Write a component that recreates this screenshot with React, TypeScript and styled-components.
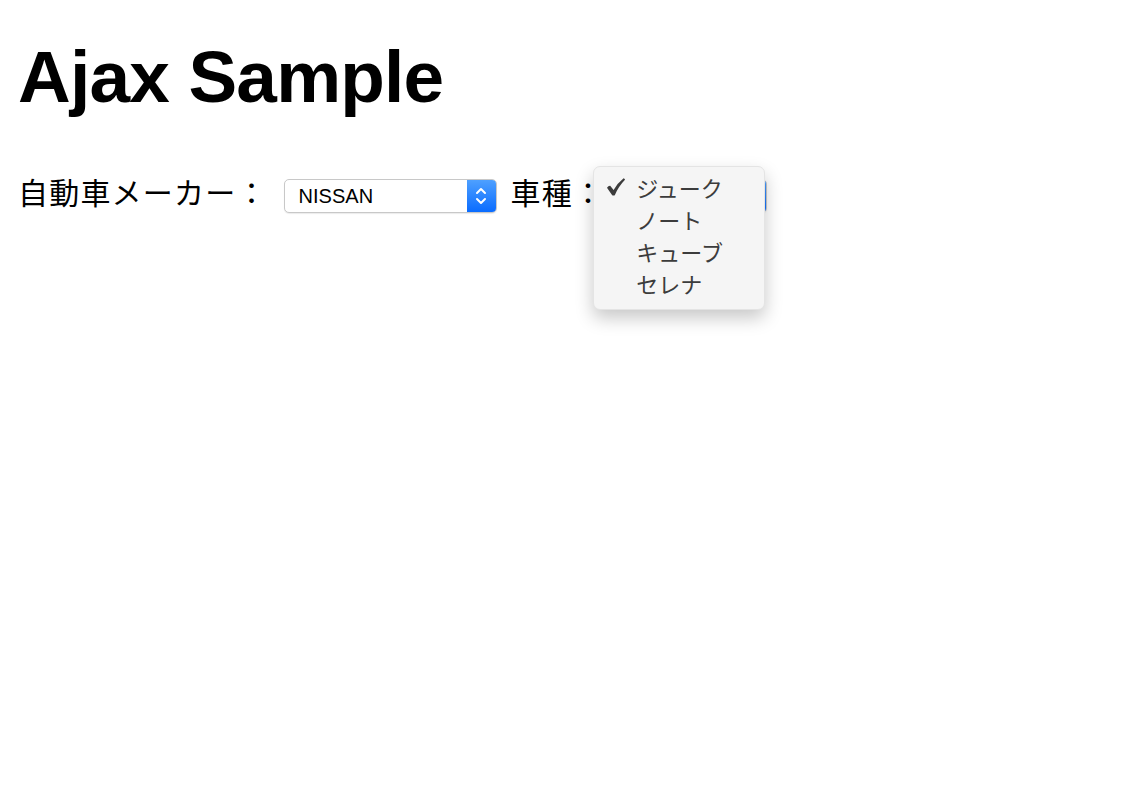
import React from "react";
import styled, { createGlobalStyle } from "styled-components";

const GlobalStyle = createGlobalStyle`
  html, body {
    margin: 0;
    padding: 0;
    background: #ffffff;
  }
  body {
    font-family: "Liberation Sans", "Noto Sans CJK JP", sans-serif;
    color: #000;
  }
`;

const Page = styled.div`
  min-height: 812px;
  box-sizing: border-box;
  padding: 36px 18px 0;
`;

const Title = styled.h1`
  margin: 0;
  font-family: "Liberation Sans", Arial, sans-serif;
  font-size: 73px;
  font-weight: 700;
  line-height: 82px;
  letter-spacing: -0.8px;
`;

const Form = styled.div`
  margin-top: 57px;
  display: flex;
  align-items: flex-start;
  height: 40px;
`;

const Label = styled.span<{ $gap: number }>`
  font-family: "Noto Sans CJK JP", sans-serif;
  font-size: 30px;
  line-height: 32px;
  letter-spacing: 1.2px;
  white-space: nowrap;
  margin-right: ${(p) => p.$gap}px;
`;

const SelectWrap = styled.div<{ $width: number }>`
  position: relative;
  width: ${(p) => p.$width}px;
  margin-right: 14px;
  margin-top: 4px;
`;

const SelectBox = styled.div`
  box-sizing: border-box;
  height: 34px;
  display: flex;
  align-items: center;
  border: 1px solid #c8c8c8;
  border-radius: 5px;
  background: #fff;
  box-shadow: 0 1px 1px rgba(0, 0, 0, 0.08);
  overflow: hidden;
`;

const SelectText = styled.span`
  flex: 1;
  padding-left: 14px;
  font-family: "Liberation Sans", Arial, sans-serif;
  font-size: 20px;
  color: #000;
`;

const Stepper = styled.div`
  width: 29px;
  height: 100%;
  display: flex;
  align-items: center;
  justify-content: center;
  background: linear-gradient(#4ea0ff, #0a6cff);
`;

const Popup = styled.div`
  position: absolute;
  left: -11px;
  top: -13px;
  width: 172px;
  box-sizing: border-box;
  padding: 4px 0 10px;
  background: #f5f5f5;
  border: 1px solid #e4e4e4;
  border-radius: 7px;
  box-shadow: 0 8px 18px rgba(0, 0, 0, 0.22);
  z-index: 2;
`;

const Option = styled.div`
  display: flex;
  align-items: center;
  height: 32px;
  font-family: "Noto Sans CJK JP", sans-serif;
  font-size: 22px;
  color: #3c3c3c;
`;

const Check = styled.span`
  width: 42px;
  display: flex;
  justify-content: center;
  padding-left: 1px;
  box-sizing: border-box;
`;

const Arrows = () => (
  <svg width="14" height="22" viewBox="0 0 14 22">
    <path
      d="M3 8 L7 4 L11 8 M3 14 L7 18 L11 14"
      fill="none"
      stroke="#fff"
      strokeWidth="2"
      strokeLinecap="round"
      strokeLinejoin="round"
    />
  </svg>
);

const CheckMark = () => (
  <svg width="20" height="20" viewBox="0 0 20 20">
    <path
      d="M1 10.8 Q2.4 8.6 4.2 8.8 L7.6 13 Q11.5 6 17.6 1.2 Q19.2 1.8 19 2.8 Q12.4 9.6 8.8 18.2 Q7.4 19 6.2 18.2 Z"
      fill="#3c3c3c"
    />
  </svg>
);

const models = ["ジューク", "ノート", "キューブ", "セレナ"];

export default function App() {
  return (
    <>
      <GlobalStyle />
      <Page>
        <Title>Ajax Sample</Title>
        <Form>
          <Label $gap={16}>自動車メーカー：</Label>
          <SelectWrap $width={213}>
            <SelectBox>
              <SelectText>NISSAN</SelectText>
              <Stepper>
                <Arrows />
              </Stepper>
            </SelectBox>
          </SelectWrap>
          <Label $gap={0}>車種：</Label>
          <SelectWrap $width={163}>
            <SelectBox>
              <SelectText>ジューク</SelectText>
              <Stepper>
                <Arrows />
              </Stepper>
            </SelectBox>
            <Popup>
              {models.map((m, i) => (
                <Option key={m}>
                  <Check>{i === 0 ? <CheckMark /> : null}</Check>
                  {m}
                </Option>
              ))}
            </Popup>
          </SelectWrap>
        </Form>
      </Page>
    </>
  );
}
